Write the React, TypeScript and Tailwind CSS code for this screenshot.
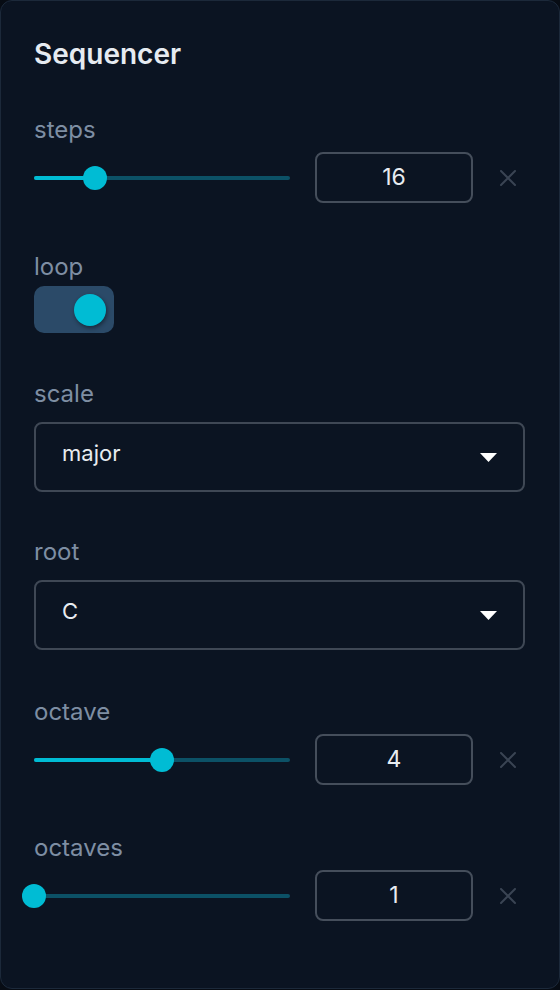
import React from 'react';

function Label({ children, className = '' }: { children: React.ReactNode; className?: string }) {
  return <div className={`text-[24px] leading-[28px] text-[#7e8ea3] ${className}`}>{children}</div>;
}

function SliderRow({ value, min, max }: { value: number; min: number; max: number }) {
  const pct = ((value - min) / (max - min)) * 100;
  return (
    <div className="flex items-center">
      <div className="relative w-[256px] h-[4px] rounded-full bg-[#0c5166]">
        <div className="absolute left-0 top-0 h-full rounded-full bg-[#00bcd4]" style={{ width: `${pct}%` }} />
        <div
          className="absolute top-1/2 w-[24px] h-[24px] -translate-x-1/2 -translate-y-1/2 rounded-full bg-[#00bcd4]"
          style={{ left: `${pct}%` }}
        />
      </div>
      <div className="ml-[25px] w-[158px] h-[51px] rounded-[8px] border-2 border-[#454e5b] flex items-center justify-center text-[23px] text-[#e8ecf1]">
        {value}
      </div>
      <svg className="ml-[27px]" width="16" height="16" viewBox="0 0 16 16">
        <path d="M1 1L15 15M15 1L1 15" stroke="#3a4453" strokeWidth="2" strokeLinecap="round" />
      </svg>
    </div>
  );
}

function Select({ value }: { value: string }) {
  return (
    <div className="w-[491px] h-[70px] rounded-[8px] border-2 border-[#3f4855] flex items-center justify-between pl-[26px] pr-[26px]">
      <span className="text-[22px] text-[#e8ecf1] pb-[7px]">{value}</span>
      <svg width="17" height="9" viewBox="0 0 17 9">
        <path d="M0 0H17L8.5 9Z" fill="#ffffff" />
      </svg>
    </div>
  );
}

export default function App() {
  return (
    <div className="w-[560px] h-[990px] bg-[#070c14]" style={{ fontFamily: 'Inter, "Noto Sans", sans-serif' }}>
      <div className="h-[989px] rounded-[12px] border border-[#1c293a] bg-[#0b1422] pl-[33px] pt-[37px]">
        <h1 className="text-[28px] leading-[32px] font-semibold text-[#e6ebf1]">Sequencer</h1>

        <Label className="mt-[46px]">steps</Label>
        <div className="mt-[8px]">
          <SliderRow value={16} min={1} max={64} />
        </div>

        <Label className="mt-[50px]">loop</Label>
        <div className="mt-[5px] w-[80px] h-[47px] rounded-[10px] bg-[#2b4a68] flex items-center justify-end pr-[8px]">
          <div className="w-[32px] h-[32px] rounded-full bg-[#00bcd4] shadow-[1px_2px_4px_rgba(0,0,0,0.45)]" />
        </div>

        <Label className="mt-[47px]">scale</Label>
        <div className="mt-[14px]">
          <Select value="major" />
        </div>

        <Label className="mt-[46px]">root</Label>
        <div className="mt-[14px]">
          <Select value="C" />
        </div>

        <Label className="mt-[48px]">octave</Label>
        <div className="mt-[8px]">
          <SliderRow value={4} min={0} max={8} />
        </div>

        <Label className="mt-[49px]">octaves</Label>
        <div className="mt-[8px]">
          <SliderRow value={1} min={1} max={8} />
        </div>
      </div>
    </div>
  );
}
